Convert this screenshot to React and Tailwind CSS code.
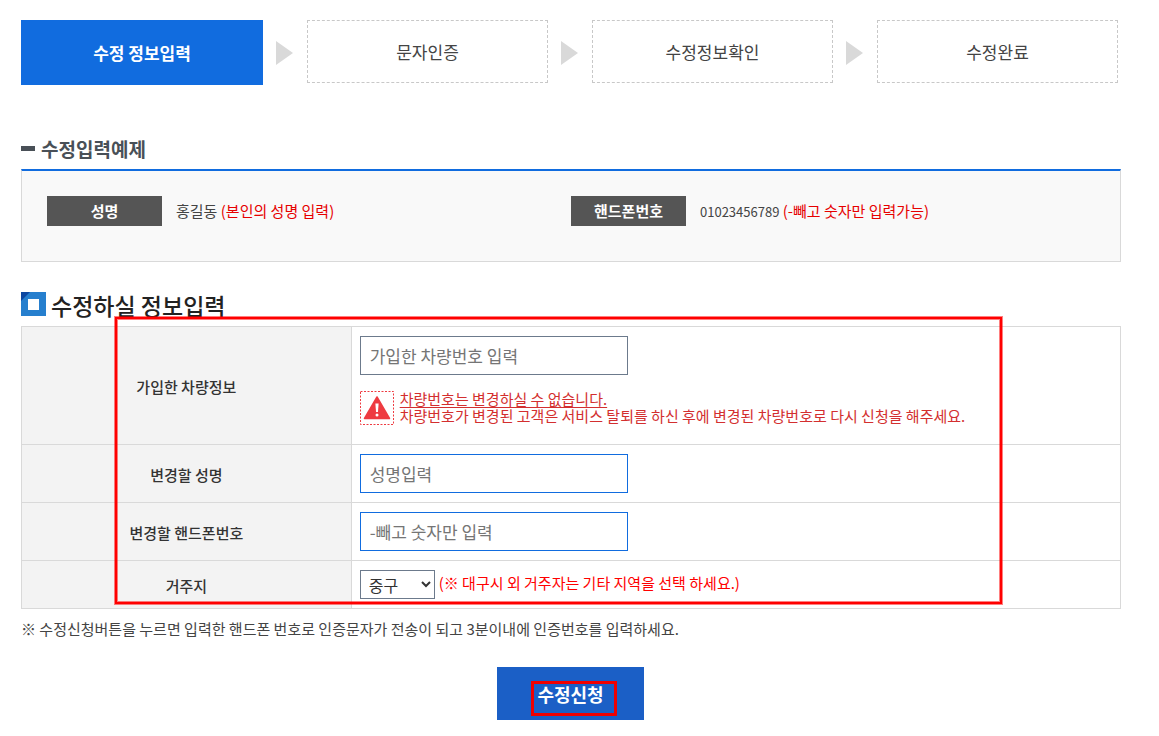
/**
 * Página de modificación de datos
 *
 * Formulario del primer paso: pasos del proceso, ejemplo de entrada,
 * tabla con los datos a modificar y botón de solicitud.
 */

import { Fragment } from 'react';

const steps = ['수정 정보입력', '문자인증', '수정정보확인', '수정완료'];

/**
 * Barra de pasos del proceso
 */
const Steps = () => {
    return (
        <ol className="mr-[3px] flex items-start text-[17px] leading-6">
            {steps.map((step, index) => (
                <Fragment key={step}>
                    {index > 0 && <StepArrow />}
                    {index === 0 ? (
                        <li aria-current="step" className="flex h-[65px] min-w-[242px] flex-1 items-center justify-center bg-[#116cdf] font-bold text-white">
                            {step}
                        </li>
                    ) : (
                        <li className="flex h-[63px] flex-1 items-center justify-center border border-dashed border-[#c8c8c8] text-[#444]">
                            {step}
                        </li>
                    )}
                </Fragment>
            ))}
        </ol>
    );
};

/**
 * Flecha entre dos pasos
 */
const StepArrow = () => {
    return (
        <li aria-hidden="true" className="flex h-[65px] w-11 flex-none items-center pl-[13px]">
            <svg width="17" height="24" viewBox="0 0 17 24">
                <path d="M0 0L17 12L0 24Z" fill="#d9d9d9" />
            </svg>
        </li>
    );
};

/**
 * Dato de ejemplo con su etiqueta
 */
const Example = ({ label, children }) => {
    return (
        <div className="flex flex-1 items-start gap-[14px] leading-[29px]">
            <dt className="h-[30px] w-[115px] flex-none bg-[#555] text-center font-bold text-white">
                {label}
            </dt>
            <dd className="whitespace-nowrap text-[#444]">{children}</dd>
        </div>
    );
};

/**
 * Icono de advertencia con borde punteado
 */
const WarningIcon = () => {
    return (
        <svg className="flex-none" width="34" height="34" viewBox="0 0 34 34" aria-hidden="true">
            <rect x="0.5" y="0.5" width="33" height="33" fill="none" stroke="#ee3b41" strokeDasharray="2 1.5" />
            <path d="M17 6L29.5 27.5H4.5Z" fill="#ee3b41" stroke="#ee3b41" strokeWidth="1.5" strokeLinejoin="round" />
            <path d="M15.4 12.5H18.6L18 21H16Z" fill="#fff" />
            <circle cx="17" cy="24" r="1.5" fill="#fff" />
        </svg>
    );
};

/**
 * Fila de la tabla: etiqueta a la izquierda, control a la derecha
 */
const Row = ({ id, label, children }) => {
    return (
        <tr className="border border-[#d9d9d9]">
            <th scope="row" className="w-[30%] border-r border-[#d9d9d9] bg-[#f3f3f3] pt-px font-medium text-[#333]">
                <label htmlFor={id}>{label}</label>
            </th>
            <td className="px-2 py-[9px]">{children}</td>
        </tr>
    );
};

const App = () => {
    return (
        <main className="bg-white pt-5 pr-[38px] pl-[21px] font-['Noto_Sans_CJK_KR',sans-serif] text-[15px] leading-[17px] text-[#333]">
            <Steps />

            <h2 className="mt-[51px] flex h-[33px] items-start gap-[6px] text-[19px] leading-[26px] font-bold text-[#495057]">
                <span className="mt-[10px] h-[5px] w-[14px] bg-[#495057]" />
                수정입력예제
            </h2>
            <dl className="flex h-[93px] items-start border border-t-2 border-[#d9d9d9] border-t-[#116cdf] bg-[#f9f9f9] p-[25px]">
                <Example label="성명">
                    홍길동 <span className="text-[#e60000]">(본인의 성명 입력)</span>
                </Example>
                <Example label="핸드폰번호">
                    <span className="text-[13px]">01023456789</span>{' '}
                    <span className="text-[#e60000]">(-빼고 숫자만 입력가능)</span>
                </Example>
            </dl>

            <h2 className="mt-[30px] flex h-[34px] items-start gap-[5px] text-[23px] leading-[26px] font-medium text-[#222]">
                <svg width="25" height="24" viewBox="0 0 25 24" aria-hidden="true">
                    <rect width="25" height="24" fill="#267fce" />
                    <path d="M0 0H9L0 9Z" fill="#0d47a1" />
                    <rect x="7" y="7" width="11" height="11" fill="#fff" />
                </svg>
                수정하실 정보입력
            </h2>

            <form onSubmit={(e) => e.preventDefault()}>
                <div className="relative">
                    <table className="w-full border-collapse">
                        <tbody>
                            <Row id="car" label="가입한 차량정보">
                                <input
                                    id="car"
                                    type="text"
                                    placeholder="가입한 차량번호 입력"
                                    className="block h-[39px] w-[268px] border border-[#6c7a8c] px-[9px] text-[17px] placeholder:text-[#757575]"
                                />
                                <div className="mt-4 mb-[10px] flex h-[34px] gap-[6px] text-[#d32f2f]">
                                    <WarningIcon />
                                    <p className="-mt-px">
                                        <span className="underline underline-offset-2">차량번호는 변경하실 수 없습니다.</span>
                                        <br />
                                        차량번호가 변경된 고객은 서비스 탈퇴를 하신 후에 변경된 차량번호로 다시 신청을 해주세요.
                                    </p>
                                </div>
                            </Row>
                            <Row id="name" label="변경할 성명">
                                <input
                                    id="name"
                                    type="text"
                                    placeholder="성명입력"
                                    className="block h-[39px] w-[268px] border border-[#116cdf] px-[9px] text-[17px] placeholder:text-[#757575]"
                                />
                            </Row>
                            <Row id="phone" label="변경할 핸드폰번호">
                                <input
                                    id="phone"
                                    type="text"
                                    placeholder="-빼고 숫자만 입력"
                                    className="block h-[39px] w-[268px] border border-[#116cdf] px-[9px] text-[17px] placeholder:text-[#757575]"
                                />
                            </Row>
                            <Row id="region" label="거주지">
                                <div className="flex items-start gap-1">
                                    <select id="region" className="h-[29px] w-[75px] border border-[#6c7a8c] bg-white pl-1 text-base leading-5 text-[#333]">
                                        <option>중구</option>
                                        <option>기타</option>
                                    </select>
                                    <span className="leading-[26px] text-[#ff0000]">(※ 대구시 외 거주자는 기타 지역을 선택 하세요.)</span>
                                </div>
                            </Row>
                        </tbody>
                    </table>
                    {/* Marco rojo que resalta los campos */}
                    <div className="pointer-events-none absolute top-[-9px] right-[119px] bottom-[5px] left-[94px] border-2 border-[#ff0000] shadow-[0_0_0_1px_rgba(255,0,0,0.5),inset_0_0_0_1px_rgba(255,0,0,0.5)]" />
                </div>

                <p className="mt-[11px] text-[#444]">
                    ※ 수정신청버튼을 누르면 입력한 핸드폰 번호로 인증문자가 전송이 되고 3분이내에 인증번호를 입력하세요.
                </p>

                <div className="mt-[30px] flex justify-center pr-px">
                    <button type="submit" className="relative h-[53px] w-[147px] bg-[#1b5fc6] text-lg font-bold text-white">
                        수정신청
                        <span className="absolute top-[14px] left-[34px] h-[35px] w-[86px] border-3 border-[#f00000]" />
                    </button>
                </div>
            </form>
        </main>
    );
};

export default App;
